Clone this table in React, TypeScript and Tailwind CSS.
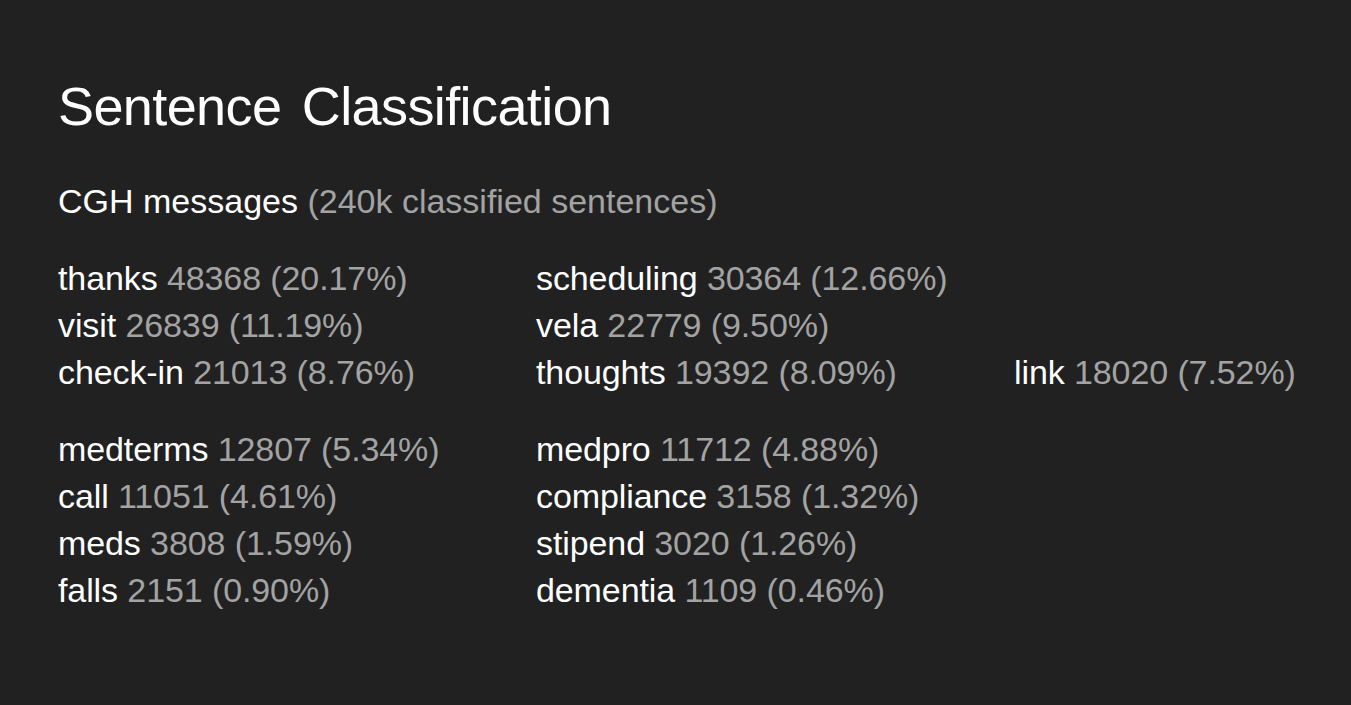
const groups = [
  [
    [
      ["thanks", "48368", "20.17%"],
      ["scheduling", "30364", "12.66%"],
    ],
    [
      ["visit", "26839", "11.19%"],
      ["vela", "22779", "9.50%"],
    ],
    [
      ["check-in", "21013", "8.76%"],
      ["thoughts", "19392", "8.09%"],
      ["link", "18020", "7.52%"],
    ],
  ],
  [
    [
      ["medterms", "12807", "5.34%"],
      ["medpro", "11712", "4.88%"],
    ],
    [
      ["call", "11051", "4.61%"],
      ["compliance", "3158", "1.32%"],
    ],
    [
      ["meds", "3808", "1.59%"],
      ["stipend", "3020", "1.26%"],
    ],
    [
      ["falls", "2151", "0.90%"],
      ["dementia", "1109", "0.46%"],
    ],
  ],
];

export default function App() {
  return (
    <div className="min-h-screen bg-[#212121] px-[58px] pt-[76px] font-['Liberation_Sans',Arial,sans-serif] text-white">
      <h1 className="text-[54px] leading-[60px] tracking-[-0.6px] [word-spacing:6px]">Sentence Classification</h1>
      <p className="mt-[48px] text-[34px] leading-[34px]">
        CGH messages <span className="text-[#a3a3a3]">(240k classified sentences)</span>
      </p>
      <div className="mt-[37px] flex flex-col gap-[30px]">
        {groups.map((rows, g) => (
          <div key={g}>
            {rows.map((row, r) => (
              <div
                key={r}
                className="grid grid-cols-[478px_478px_auto] text-[34px] leading-[47px] tracking-[-0.1px]"
              >
                {row.map(([label, count, pct]) => (
                  <div key={label} className="whitespace-nowrap">
                    {label}{" "}
                    <span className="text-[#a3a3a3]">
                      {count} ({pct})
                    </span>
                  </div>
                ))}
              </div>
            ))}
          </div>
        ))}
      </div>
    </div>
  );
}
